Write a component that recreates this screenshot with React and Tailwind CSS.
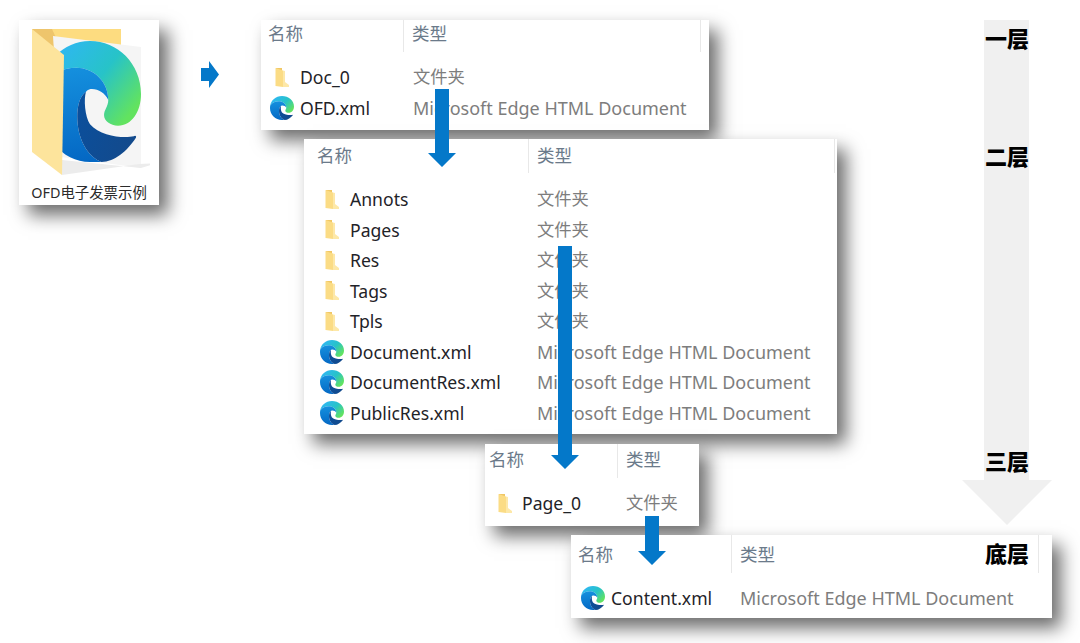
import React from 'react';

const FONT = '[font-family:"Noto_Sans","Noto_Sans_CJK_SC",sans-serif]';
const SHADOW = 'shadow-[9px_10px_17px_rgba(0,0,0,0.58)]';

const EdgeShapes = () => (
    <>
        <path fill="url(#edgeTop)" d="M12 0C5.5 0 1 4.5.2 9.5 2.2 6.6 5.5 5.3 8.8 5.3c4 0 7.5 2.7 7.5 6.4 0 1.3-1 1.9-1 3 0 1.2 1.5 2.1 3.3 2.1 3.2 0 5.4-2.8 5.4-6.3C24 4.5 18.5 0 12 0z" />
        <path fill="url(#edgeMid)" d="M.2 9.5C2.2 6.6 5.5 5.3 8.8 5.3c4 0 7.5 2.7 7.5 6.4-.8-1.5-2.8-2.4-4.5-2.1-.4.1-.6.3-.74.45C9.5 11 9 13 9 15c0 4.5 2.5 8 5.7 9H12C5.4 24 0 18.6 0 12c0-.8.1-1.7.2-2.5z" />
        <path fill="url(#edgeDark)" d="M11.06 10.05C9.5 11 9 13 9 15c0 4.5 2.5 8 5.7 9 3.1 0 6.1-2.2 8.1-4.8.2-.4-.2-.5-.5-.3-2.3.4-7.8.1-10.3-2.4-1.2-1.5-1.5-5-.94-6.45z" />
    </>
);

const EdgeIcon = ({ className }) => (
    <svg className={className} viewBox="0 0 24 24">
        <EdgeShapes />
    </svg>
);

const FolderIcon = ({ className }) => (
    <svg className={className} viewBox="0 0 16 21">
        <path fill="#f0c765" d="M2 1h6v4H2z" />
        <path fill="#fbdc85" d="M1.5 1 L9 3.5 V20 L1.5 19z" />
        <path fill="#fde8a8" d="M9 3.5 L11 4 V15 L15 18 V20 H9z" />
    </svg>
);

const BlueArrow = ({ className }) => (
    <svg className={className} viewBox="0 0 28 78">
        <path fill="#0478c9" d="M7 0h14v64h7L14 78 0 64h7z" />
    </svg>
);

const Row = ({ icon, name, type, iconCol, nameCol }) => (
    <div className="flex h-[30.5px] items-center">
        <div className={`flex shrink-0 items-center justify-center ${iconCol}`}>
            {icon === 'edge'
                ? <EdgeIcon className="h-[24px] w-[24px]" />
                : <FolderIcon className="h-[21px] w-[16px]" />}
        </div>
        <div className={`shrink-0 whitespace-nowrap text-[17.6px] text-[#1f2328] ${nameCol}`}>{name}</div>
        <div className={`whitespace-nowrap text-[#7d7d7d] ${icon === 'edge' ? 'text-[18px]' : 'text-[17.3px]'}`}>{type}</div>
    </div>
);

const Panel = ({ box, hdr, hdrPad, col1, col2, rowsTop, iconCol, nameCol, rows }) => (
    <div className={`absolute bg-white leading-[24px] ${SHADOW} ${FONT} ${box}`}>
        <div className={`flex text-[17.5px] text-[#6b7a8a] ${hdr}`}>
            <div className={`shrink-0 border-r border-[#e8e8e8] ${col1} ${hdrPad}`}>名称</div>
            <div className={`shrink-0 pl-[8px] ${col2} ${hdrPad}`}>类型</div>
        </div>
        <div className={rowsTop}>
            {rows.map((r) => (
                <Row key={r.name} {...r} iconCol={iconCol} nameCol={nameCol} />
            ))}
        </div>
    </div>
);

const EDGE_TYPE = 'Microsoft Edge HTML Document';

const LayerLabel = ({ className, children }) => (
    <div className={`absolute left-[984px] w-[46px] text-center text-[22px] font-black leading-[30px] text-black ${FONT} ${className}`}>
        {children}
    </div>
);

export default function App() {
    return (
        <div className="relative h-[643px] w-[1080px] overflow-hidden bg-white">
            {/* shared gradients for every edge logo */}
            <svg className="absolute h-0 w-0">
                <defs>
                    <linearGradient id="edgeTop" x1="0.1" y1="0.1" x2="1" y2="0.7">
                        <stop offset="0" stopColor="#2fb6f5" />
                        <stop offset="0.55" stopColor="#27c3c8" />
                        <stop offset="1" stopColor="#62e35f" />
                    </linearGradient>
                    <linearGradient id="edgeMid" x1="0.4" y1="0" x2="0.5" y2="1">
                        <stop offset="0" stopColor="#1590de" />
                        <stop offset="1" stopColor="#0468c4" />
                    </linearGradient>
                    <linearGradient id="edgeDark" x1="0" y1="0.2" x2="1" y2="0.6">
                        <stop offset="0" stopColor="#0b4f9c" />
                        <stop offset="1" stopColor="#134a8c" />
                    </linearGradient>
                </defs>
            </svg>

            {/* big grey arrow behind the panels */}
            <svg className="absolute left-[962px] top-[20px] h-[505px] w-[90px]" viewBox="0 0 90 505">
                <path fill="#f0f0f0" d="M22 0h45v460h23l-45 45-45-45h22z" />
            </svg>

            {/* source folder */}
            <div className={`absolute left-[19px] top-[20px] h-[185px] w-[140px] bg-white ${SHADOW} ${FONT}`}>
                <svg className="absolute left-[6px] top-[5px] h-[155px] w-[125px]" viewBox="25 25 125 155">
                    <path fill="#fddc80" d="M32 29h89v45H32z" />
                    <path fill="#eec56c" d="M32 29h20l12 26-32-10z" />
                    <path fill="#f5f5f5" d="M53 36l88 11v121l-80-11z" />
                    <g transform="translate(39 41) scale(4.25 5.04)">
                        <EdgeShapes />
                    </g>
                    <path fill="#ececec" d="M62 160l79 8 16-5-18 1-77 11z" />
                    <path fill="#fde49c" d="M32 29l32 26-2 120-30-23z" />
                </svg>
                <div className="absolute bottom-[1px] left-0 w-full text-center text-[14.4px] leading-[22px] text-[#2b2b2b]">
                    OFD电子发票示例
                </div>
            </div>

            {/* small arrow to the first level */}
            <svg className="absolute left-[201px] top-[61px] h-[27px] w-[18px]" viewBox="0 0 18 27">
                <path fill="#0478c9" d="M0 7h8V0l10 13.5L8 27v-7H0z" />
            </svg>

            <Panel
                box="left-[261px] top-[20px] h-[110px] w-[448px]"
                hdr="h-[32px]"
                hdrPad="pt-[1px]"
                col1="w-[143px] pl-[7px]"
                col2="w-[297px] border-r border-[#e8e8e8]"
                rowsTop="mt-[10px]"
                iconCol="w-[39px] pl-[2px]"
                nameCol="w-[113px]"
                rows={[
                    { icon: 'folder', name: 'Doc_0', type: '文件夹' },
                    { icon: 'edge', name: 'OFD.xml', type: EDGE_TYPE },
                ]}
            />

            <Panel
                box="left-[304px] top-[139px] h-[295px] w-[533px]"
                hdr="h-[34px]"
                hdrPad="pt-[4px]"
                col1="w-[225px] pl-[13px]"
                col2="w-[306px] border-r border-[#e8e8e8]"
                rowsTop="mt-[11px]"
                iconCol="w-[46px] pl-[10px]"
                nameCol="w-[187px]"
                rows={[
                    { icon: 'folder', name: 'Annots', type: '文件夹' },
                    { icon: 'folder', name: 'Pages', type: '文件夹' },
                    { icon: 'folder', name: 'Res', type: '文件夹' },
                    { icon: 'folder', name: 'Tags', type: '文件夹' },
                    { icon: 'folder', name: 'Tpls', type: '文件夹' },
                    { icon: 'edge', name: 'Document.xml', type: EDGE_TYPE },
                    { icon: 'edge', name: 'DocumentRes.xml', type: EDGE_TYPE },
                    { icon: 'edge', name: 'PublicRes.xml', type: EDGE_TYPE },
                ]}
            />

            <Panel
                box="left-[485px] top-[444px] h-[82px] w-[214px]"
                hdr="h-[34px]"
                hdrPad="pt-[3px]"
                col1="w-[133px] pl-[4px]"
                col2="w-[80px]"
                rowsTop="mt-[10px]"
                iconCol="w-[37px] pl-[2px]"
                nameCol="w-[104px]"
                rows={[{ icon: 'folder', name: 'Page_0', type: '文件夹' }]}
            />

            <Panel
                box="left-[571px] top-[535px] h-[83px] w-[481px]"
                hdr="h-[38px]"
                hdrPad="pt-[7px]"
                col1="w-[161px] pl-[7px]"
                col2="w-[307px] border-r border-[#e8e8e8]"
                rowsTop="mt-[10px]"
                iconCol="w-[40px] pl-[4px]"
                nameCol="w-[129px]"
                rows={[{ icon: 'edge', name: 'Content.xml', type: EDGE_TYPE }]}
            />

            {/* blue arrows lie over the panels */}
            <BlueArrow className="absolute left-[428px] top-[89px] h-[78px] w-[28px]" />
            <svg className="absolute left-[551px] top-[246px] h-[223px] w-[28px]" viewBox="0 0 28 223">
                <path fill="#0478c9" d="M7 0h14v209h7l-14 14-14-14h7z" />
            </svg>
            <svg className="absolute left-[638px] top-[516px] h-[49px] w-[28px]" viewBox="0 0 28 49">
                <path fill="#0478c9" d="M7 0h14v35h7L14 49 0 35h7z" />
            </svg>

            <LayerLabel className="top-[23px]">一层</LayerLabel>
            <LayerLabel className="top-[141px]">二层</LayerLabel>
            <LayerLabel className="top-[446px]">三层</LayerLabel>
            <LayerLabel className="top-[538px]">底层</LayerLabel>
        </div>
    );
}
